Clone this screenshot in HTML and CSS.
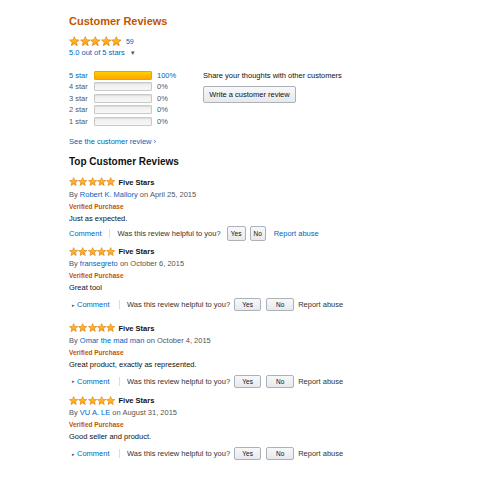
FILE: index.html
```html
<!DOCTYPE html>
<html>
<head>
<meta charset="utf-8">
<link rel="stylesheet" href="styles.css">
</head>
<body>
<svg class="defs" width="0" height="0">
  <defs>
    <linearGradient id="sg" x1="0" y1="0" x2="0" y2="1">
      <stop offset="0" stop-color="#ffce3a"/>
      <stop offset="1" stop-color="#ff9c00"/>
    </linearGradient>
    <symbol id="star" viewBox="0 0 20 20">
      <polygon points="10,1.2 12.5,7.2 19,7.6 14,11.8 15.6,18.4 10,14.8 4.4,18.4 6,11.8 1,7.6 7.5,7.2" fill="url(#sg)" stroke="#d9791a" stroke-width="1.2" stroke-linejoin="round"/>
    </symbol>
  </defs>
</svg>
<div class="page">
  <h2 class="title">Customer Reviews</h2>
  <div class="summary-stars">
    <span class="stars big">
      <svg><use href="#star"/></svg><svg><use href="#star"/></svg><svg><use href="#star"/></svg><svg><use href="#star"/></svg><svg><use href="#star"/></svg>
    </span>
    <a class="link count">59</a>
  </div>
  <div class="rating-text"><a class="link">5.0 out of 5 stars</a><span class="caret">▾</span></div>

  <div class="hist-wrap">
    <div class="hist">
      <div class="hrow active"><span class="hlabel">5 star</span><span class="bar"><span class="fill" style="width:100%"></span></span><span class="pct">100%</span></div>
      <div class="hrow"><span class="hlabel">4 star</span><span class="bar"></span><span class="pct">0%</span></div>
      <div class="hrow"><span class="hlabel">3 star</span><span class="bar"></span><span class="pct">0%</span></div>
      <div class="hrow"><span class="hlabel">2 star</span><span class="bar"></span><span class="pct">0%</span></div>
      <div class="hrow"><span class="hlabel">1 star</span><span class="bar"></span><span class="pct">0%</span></div>
    </div>
    <div class="share">
      <div class="share-text">Share your thoughts with other customers</div>
      <button class="btn write">Write a customer review</button>
    </div>
  </div>

  <div class="see-all"><a class="link">See the customer review ›</a></div>

  <h3 class="top-title">Top Customer Reviews</h3>

  <div class="review r1">
    <div class="rtitle"><span class="stars small"><svg><use href="#star"/></svg><svg><use href="#star"/></svg><svg><use href="#star"/></svg><svg><use href="#star"/></svg><svg><use href="#star"/></svg></span><span class="headline">Five Stars</span></div>
    <div class="byline">By <a class="link">Robert K. Mallory</a> on April 25, 2015</div>
    <div class="verified">Verified Purchase</div>
    <div class="rtext">Just as expected.</div>
    <div class="actions compact">
      <a class="link">Comment</a><span class="sep"></span><span class="helpful">Was this review helpful to you?</span><button class="btn vote yes">Yes</button><button class="btn vote no">No</button><a class="link report">Report abuse</a>
    </div>
  </div>

  <div class="review r2">
    <div class="rtitle"><span class="stars small"><svg><use href="#star"/></svg><svg><use href="#star"/></svg><svg><use href="#star"/></svg><svg><use href="#star"/></svg><svg><use href="#star"/></svg></span><span class="headline">Five Stars</span></div>
    <div class="byline">By <a class="link">fransegreto</a> on October 6, 2015</div>
    <div class="verified">Verified Purchase</div>
    <div class="rtext">Great tool</div>
    <div class="actions">
      <span class="tri">▸</span><a class="link">Comment</a><span class="sep"></span><span class="helpful">Was this review helpful to you?</span><button class="btn vote yes">Yes</button><button class="btn vote no">No</button><span class="report plain">Report abuse</span>
    </div>
  </div>

  <div class="review r3">
    <div class="rtitle"><span class="stars small"><svg><use href="#star"/></svg><svg><use href="#star"/></svg><svg><use href="#star"/></svg><svg><use href="#star"/></svg><svg><use href="#star"/></svg></span><span class="headline">Five Stars</span></div>
    <div class="byline">By <a class="link">Omar the mad man</a> on October 4, 2015</div>
    <div class="verified">Verified Purchase</div>
    <div class="rtext">Great product, exactly as represented.</div>
    <div class="actions">
      <span class="tri">▸</span><a class="link">Comment</a><span class="sep"></span><span class="helpful">Was this review helpful to you?</span><button class="btn vote yes">Yes</button><button class="btn vote no">No</button><span class="report plain">Report abuse</span>
    </div>
  </div>

  <div class="review r4">
    <div class="rtitle"><span class="stars small"><svg><use href="#star"/></svg><svg><use href="#star"/></svg><svg><use href="#star"/></svg><svg><use href="#star"/></svg><svg><use href="#star"/></svg></span><span class="headline">Five Stars</span></div>
    <div class="byline">By <a class="link">VU A. LE</a> on August 31, 2015</div>
    <div class="verified">Verified Purchase</div>
    <div class="rtext">Good seller and product.</div>
    <div class="actions">
      <span class="tri">▸</span><a class="link">Comment</a><span class="sep"></span><span class="helpful">Was this review helpful to you?</span><button class="btn vote yes">Yes</button><button class="btn vote no">No</button><span class="report plain">Report abuse</span>
    </div>
  </div>
</div>
</body>
</html>
```
FILE: styles.css
```css
* { box-sizing: border-box; }
html, body { margin: 0; padding: 0; background: #fff; }
body {
  font-family: "Liberation Sans", Arial, sans-serif;
  font-size: 7.5px;
  color: #111;
}
.defs { position: absolute; width: 0; height: 0; overflow: hidden; }
.page { padding: 14px 0 0 69px; }
.link { color: #0066c0; text-decoration: none; }

.title {
  margin: 0;
  font-size: 11px;
  line-height: 14px;
  font-weight: bold;
  color: #c45500;
}
.summary-stars {
  margin-top: 7px;
  height: 12px;
  display: flex;
  align-items: center;
}
.stars { display: inline-flex; align-items: center; }
.stars svg { display: block; }
.stars.big svg { width: 10.6px; height: 10.6px; }
.stars.small svg { width: 9.3px; height: 9.3px; }
.count { margin-left: 4px; font-size: 7px; }
.rating-text { line-height: 10px; height: 10px; margin-top: 0.5px; }
.caret { color: #555; margin-left: 6px; font-size: 7px; }

.hist-wrap { display: flex; margin-top: 12px; }
.hist { width: 134px; }
.hrow { display: flex; align-items: center; height: 11.5px; color: #555; }
.hlabel { width: 25px; }
.hrow.active .hlabel, .hrow.active .pct { color: #0066c0; }
.bar {
  width: 58px;
  height: 9px;
  border: 1px solid #c9c9c9;
  border-radius: 1px;
  background: linear-gradient(#eeeeee, #f7f7f7);
  box-shadow: inset 0 1px 1px rgba(0,0,0,0.08);
  overflow: hidden;
  display: block;
}
.hrow.active .bar { border-color: #e8a400; }
.fill {
  display: block;
  height: 100%;
  background: linear-gradient(#ffce00, #ffa700);
}
.pct { margin-left: 5px; }
.share-text { line-height: 11.5px; }
.btn {
  font-family: "Liberation Sans", Arial, sans-serif;
  color: #111;
  background: linear-gradient(#f7f8fa, #e7e9ec);
  border: 1px solid #adb1b8;
  border-radius: 2px;
  padding: 0;
  cursor: pointer;
}
.write {
  margin-top: 4.5px;
  width: 93px;
  height: 17px;
  font-size: 7.5px;
  display: block;
}

.see-all { margin-top: 10px; line-height: 10px; }
.top-title {
  margin: 9px 0 0;
  font-size: 10px;
  line-height: 12px;
  font-weight: bold;
  color: #111;
}

.review.r1 { margin-top: 8.5px; }
.review.r2 { margin-top: 5px; }
.review.r3 { margin-top: 10px; }
.review.r4 { margin-top: 6px; }
.rtitle { display: flex; align-items: center; height: 11px; }
.headline { font-weight: bold; margin-left: 3px; }
.byline { margin-top: 1px; line-height: 11px; color: #555; }
.verified {
  margin-top: 2px;
  line-height: 9px;
  font-size: 6.5px;
  font-weight: bold;
  color: #c45500;
}
.rtext { margin-top: 3px; line-height: 10px; color: #111; }
.actions {
  margin-top: 3.5px;
  height: 16px;
  display: flex;
  align-items: center;
  color: #333;
}
.actions.compact { margin-top: 1.5px; }
.tri { font-size: 5px; color: #555; margin: 0 2px 0 3px; }
.sep {
  display: inline-block;
  width: 1px;
  height: 9px;
  background: #ddd;
  margin: 0 7px 0 9.5px;
}
.actions.compact .sep { margin: 0 7.5px 0 7.5px; }
.helpful { color: #333; }
.vote {
  font-size: 6.5px;
  height: 13px;
  color: #111;
}
.actions .yes { width: 27px; margin-left: 4px; }
.actions .no { width: 28px; margin-left: 5px; }
.actions .report { margin-left: 4px; }
.actions.compact .vote { height: 15px; }
.actions.compact .yes { width: 19px; margin-left: 6px; }
.actions.compact .no { width: 16px; margin-left: 4px; }
.actions.compact .report { margin-left: 8px; }
.report.plain { color: #333; }
```
